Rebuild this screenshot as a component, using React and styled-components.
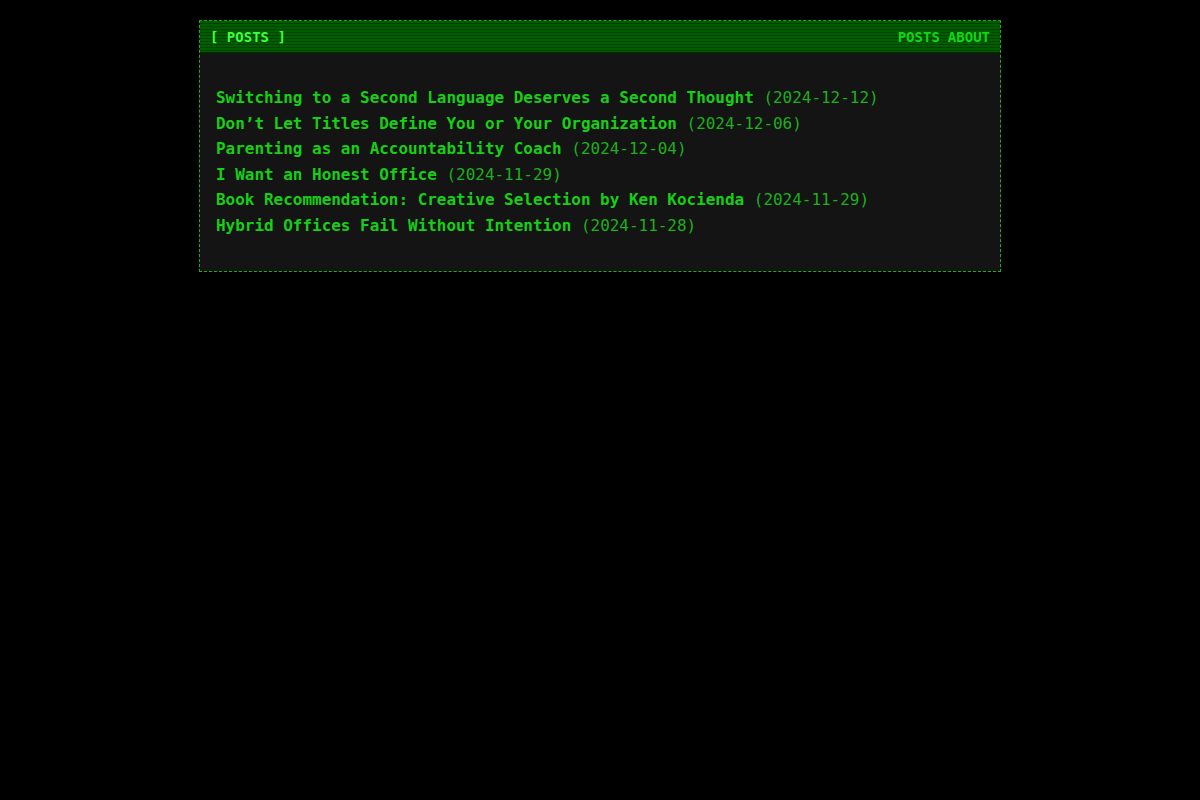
import styled, { createGlobalStyle } from "styled-components";

const GlobalStyle = createGlobalStyle`
  html, body {
    margin: 0;
    padding: 0;
    background: #000;
  }
  body {
    font-family: "DejaVu Sans Mono", "Liberation Mono", monospace;
  }
`;

const Page = styled.div`
  min-height: 800px;
  padding-top: 20px;
  display: flex;
  justify-content: center;
  align-items: flex-start;
`;

const Terminal = styled.section`
  width: 800px;
  border: 1px dashed #22a822;
  background: #141414;
`;

// 스캔라인 헤더
const Header = styled.header`
  height: 32px;
  padding: 0 10px;
  display: flex;
  align-items: center;
  justify-content: space-between;
  background: repeating-linear-gradient(
    to bottom,
    #005e00 0px,
    #005e00 2px,
    #004200 2px,
    #004200 3px
  );
  border-bottom: 1px solid #003000;
  box-sizing: border-box;
`;

const Title = styled.span`
  font-size: 14px;
  font-weight: bold;
  color: #3dff3d;
  white-space: pre;
`;

const Nav = styled.nav`
  display: flex;
  gap: 8px;
`;

const NavLink = styled.a`
  font-size: 14px;
  font-weight: bold;
  color: #13d613;
  text-decoration: none;
`;

const Body = styled.div`
  padding: 16px;
`;

const List = styled.ul`
  list-style: none;
  margin: 16px 0;
  padding: 0;
`;

const Item = styled.li`
  font-size: 16px;
  line-height: 25.6px;
  letter-spacing: -0.03px; // 폭 맞추려고
  white-space: nowrap;
`;

const PostLink = styled.a`
  color: #16cf16;
  font-weight: bold;
  text-decoration: none;
`;

const PostDate = styled.span`
  color: #1cb01c;
`;

const posts = [
  ["Switching to a Second Language Deserves a Second Thought", "2024-12-12"],
  ["Don’t Let Titles Define You or Your Organization", "2024-12-06"],
  ["Parenting as an Accountability Coach", "2024-12-04"],
  ["I Want an Honest Office", "2024-11-29"],
  ["Book Recommendation: Creative Selection by Ken Kocienda", "2024-11-29"],
  ["Hybrid Offices Fail Without Intention", "2024-11-28"],
];

export default function App() {
  return (
    <>
      <GlobalStyle />
      <Page>
        <Terminal>
          <Header>
            <Title>[ POSTS ]</Title>
            <Nav>
              <NavLink href="#">POSTS</NavLink>
              <NavLink href="#">ABOUT</NavLink>
            </Nav>
          </Header>
          <Body>
            <List>
              {posts.map(([title, date]) => (
                <Item key={title}>
                  <PostLink href="#">{title}</PostLink>{" "}
                  <PostDate>({date})</PostDate>
                </Item>
              ))}
            </List>
          </Body>
        </Terminal>
      </Page>
    </>
  );
}
